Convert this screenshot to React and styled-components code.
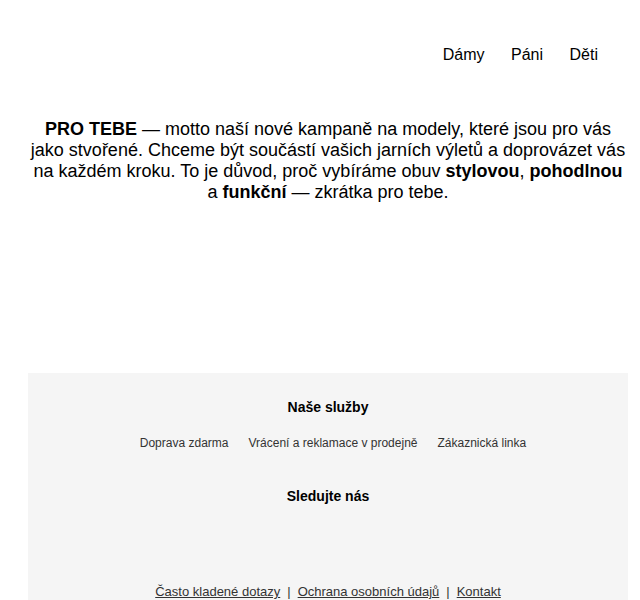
import React from "react";
import styled, { createGlobalStyle } from "styled-components";

const GlobalStyle = createGlobalStyle`
  html, body {
    margin: 0;
    padding: 0;
    background: #ffffff;
  }
  body {
    font-family: "Liberation Sans", Arial, sans-serif;
    color: #000;
  }
`;

const Page = styled.div`
  width: 600px;
  margin: 0 12px 0 28px;
`;

const Header = styled.header`
  display: flex;
  justify-content: flex-end;
  padding: 45px 30px 0 0;
`;

const Nav = styled.nav`
  display: flex;
  gap: 26.5px;
`;

const NavLink = styled.a`
  font-size: 16px;
  line-height: 20px;
  color: #000;
  text-decoration: none;
`;

const Intro = styled.p`
  margin: 54px 0 0;
  font-size: 18px;
  line-height: 21px;
  text-align: center;
  color: #000;

  strong {
    font-weight: 700;
  }
`;

const Footer = styled.footer`
  margin-top: 170px;
  background: #f5f5f5;
  padding: 26px 0 2px;
  display: flex;
  flex-direction: column;
  align-items: center;
`;

const FooterTitle = styled.h3`
  margin: 0;
  font-size: 14px;
  line-height: 17px;
  font-weight: 700;
  color: #000;
`;

const ServiceList = styled.ul`
  list-style: none;
  margin: 20px 0 38px;
  padding: 0 0 0 10px;
  display: flex;
  gap: 20px;
`;

const ServiceItem = styled.li`
  font-size: 12px;
  line-height: 14px;
  color: #333;
`;

const SocialRow = styled.div`
  height: 79px;
`;

const LegalRow = styled.div`
  display: flex;
  align-items: center;
  gap: 7px;
  font-size: 13px;
  line-height: 15px;
  color: #333;
`;

const LegalLink = styled.a`
  color: #333;
  text-decoration: underline;
`;

const Divider = styled.span`
  color: #333;
`;

const services = ["Doprava zdarma", "Vrácení a reklamace v prodejně", "Zákaznická linka"];
const legal = ["Často kladené dotazy", "Ochrana osobních údajů", "Kontakt"];

export default function App() {
  return (
    <>
      <GlobalStyle />
      <Page>
        <Header>
          <Nav>
            <NavLink href="#">Dámy</NavLink>
            <NavLink href="#">Páni</NavLink>
            <NavLink href="#">Děti</NavLink>
          </Nav>
        </Header>
        <Intro>
          <strong>PRO TEBE</strong> — motto naší nové kampaně na modely, které jsou pro vás
          jako stvořené. Chceme být součástí vašich jarních výletů a doprovázet vás
          na každém kroku. To je důvod, proč vybíráme obuv <strong>stylovou</strong>,{" "}
          <strong>pohodlnou</strong> a <strong>funkční</strong> — zkrátka pro tebe.
        </Intro>
        <Footer>
          <FooterTitle>Naše služby</FooterTitle>
          <ServiceList>
            {services.map((s) => (
              <ServiceItem key={s}>{s}</ServiceItem>
            ))}
          </ServiceList>
          <FooterTitle>Sledujte nás</FooterTitle>
          <SocialRow />
          <LegalRow>
            {legal.map((l, i) => (
              <React.Fragment key={l}>
                {i > 0 && <Divider>|</Divider>}
                <LegalLink href="#">{l}</LegalLink>
              </React.Fragment>
            ))}
          </LegalRow>
        </Footer>
      </Page>
    </>
  );
}
